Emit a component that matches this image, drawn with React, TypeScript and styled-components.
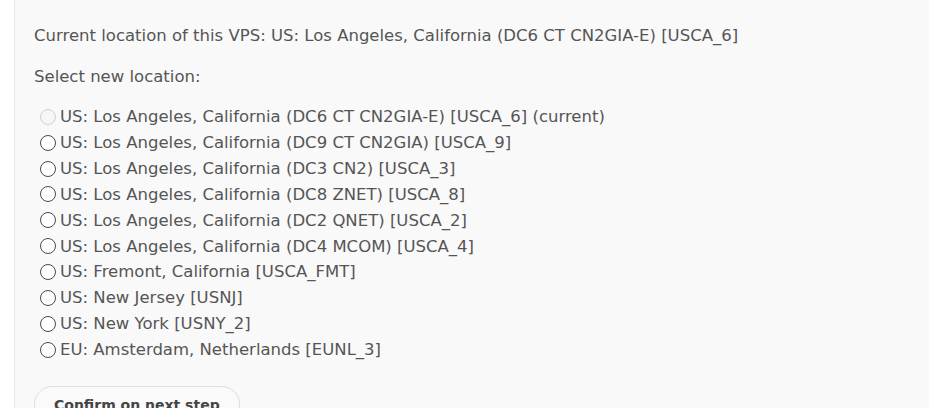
import React, { ReactElement, useState } from 'react';
import styled, { createGlobalStyle } from 'styled-components';

interface LocationOption {
  id: string;
  label: string;
  current?: boolean;
}

const LOCATIONS: LocationOption[] = [
  { id: 'USCA_6', label: 'US: Los Angeles, California (DC6 CT CN2GIA-E) [USCA_6] (current)', current: true },
  { id: 'USCA_9', label: 'US: Los Angeles, California (DC9 CT CN2GIA) [USCA_9]' },
  { id: 'USCA_3', label: 'US: Los Angeles, California (DC3 CN2) [USCA_3]' },
  { id: 'USCA_8', label: 'US: Los Angeles, California (DC8 ZNET) [USCA_8]' },
  { id: 'USCA_2', label: 'US: Los Angeles, California (DC2 QNET) [USCA_2]' },
  { id: 'USCA_4', label: 'US: Los Angeles, California (DC4 MCOM) [USCA_4]' },
  { id: 'USCA_FMT', label: 'US: Fremont, California [USCA_FMT]' },
  { id: 'USNJ', label: 'US: New Jersey [USNJ]' },
  { id: 'USNY_2', label: 'US: New York [USNY_2]' },
  { id: 'EUNL_3', label: 'EU: Amsterdam, Netherlands [EUNL_3]' },
];

const GlobalStyle = createGlobalStyle`
  html, body {
    margin: 0;
    background: #ffffff;
    overflow: hidden;
  }
`;

const App = (): ReactElement => {
  const [selected, setSelected] = useState<string>('');

  return (
    <>
      <GlobalStyle />
      <Page>
        <Panel>
          <Paragraph>
            Current location of this VPS: US: Los Angeles, California (DC6 CT CN2GIA-E) [USCA_6]
          </Paragraph>
          <Paragraph $gap={16}>Select new location:</Paragraph>
          <OptionList>
            {LOCATIONS.map((loc) => (
              <OptionRow key={loc.id}>
                <Radio
                  type="radio"
                  name="location"
                  value={loc.id}
                  disabled={loc.current}
                  checked={selected === loc.id}
                  onChange={() => setSelected(loc.id)}
                />
                {loc.label}
              </OptionRow>
            ))}
          </OptionList>
          <ConfirmButton type="button">Confirm on next step</ConfirmButton>
        </Panel>
      </Page>
    </>
  );
};

const Page = styled.div`
  padding: 0 0 0 14px;
  font-family: 'DejaVu Sans', Verdana, sans-serif;
`;

const Panel = styled.div`
  background-color: #f9f9f9;
  border-left: 1px solid #e6e6e6;
  padding: 25px 19px 40px 19px;
  min-height: 420px;
  color: #555555;
`;

const Paragraph = styled.p<{ $gap?: number }>`
  margin: 0 0 ${({ $gap = 19 }) => $gap}px 0;
  font-size: 16.5px;
  line-height: 22px;
`;

const OptionList = styled.div`
  display: flex;
  flex-direction: column;
`;

const OptionRow = styled.label`
  display: flex;
  align-items: center;
  height: 25.85px;
  font-size: 16.5px;
  color: #555555;
`;

const Radio = styled.input`
  appearance: none;
  box-sizing: border-box;
  width: 16px;
  height: 16px;
  margin: 0 4px 0 6px;
  border: 1px solid #4a4a4a;
  border-radius: 50%;
  background-color: #ffffff;

  &:disabled {
    border-color: #cfcfcf;
    background-color: #f6f6f6;
  }

  &:checked {
    background: radial-gradient(circle, #333333 0 3.5px, #ffffff 4px);
  }
`;

const ConfirmButton = styled.button`
  margin-top: 24px;
  padding: 10px 19px;
  border: 1px solid #dddddd;
  border-radius: 18px;
  background-color: #fafafa;
  font-family: 'DejaVu Sans', Verdana, sans-serif;
  font-weight: bold;
  font-size: 14px;
  color: #444444;
`;

export default App;
